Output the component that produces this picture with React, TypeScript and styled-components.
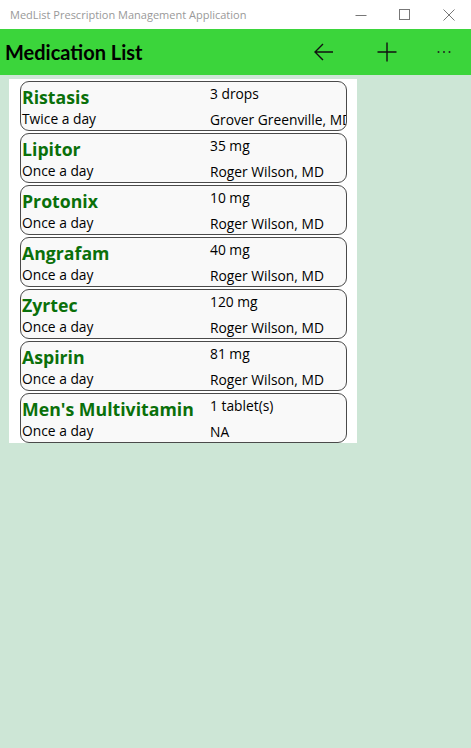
import React from 'react'
import styled, { createGlobalStyle } from 'styled-components'

interface Medication {
  name: string;
  frequency: string;
  dose: string;
  prescriber: string;
}

const meds: Medication[] = [
  { name: 'Ristasis', frequency: 'Twice a day', dose: '3 drops', prescriber: 'Grover Greenville, MD' },
  { name: 'Lipitor', frequency: 'Once a day', dose: '35 mg', prescriber: 'Roger Wilson, MD' },
  { name: 'Protonix', frequency: 'Once a day', dose: '10 mg', prescriber: 'Roger Wilson, MD' },
  { name: 'Angrafam', frequency: 'Once a day', dose: '40 mg', prescriber: 'Roger Wilson, MD' },
  { name: 'Zyrtec', frequency: 'Once a day', dose: '120 mg', prescriber: 'Roger Wilson, MD' },
  { name: 'Aspirin', frequency: 'Once a day', dose: '81 mg', prescriber: 'Roger Wilson, MD' },
  { name: "Men's Multivitamin", frequency: 'Once a day', dose: '1 tablet(s)', prescriber: 'NA' },
];

const App: React.FC = () => {
  return (
    <>
      <GlobalStyle />
      <TitleBar>
        <WindowTitle>MedList Prescription Management Application</WindowTitle>
        <WindowControls>
          <WinButton aria-label="minimize">
            <svg width="12" height="12" viewBox="0 0 12 12">
              <line x1="0.5" y1="6.5" x2="11.5" y2="6.5" stroke="#777" strokeWidth="1" />
            </svg>
          </WinButton>
          <WinButton aria-label="maximize">
            <svg width="12" height="12" viewBox="0 0 12 12">
              <rect x="0.5" y="0.5" width="10" height="10" fill="none" stroke="#777" strokeWidth="1" />
            </svg>
          </WinButton>
          <WinButton aria-label="close">
            <svg width="12" height="12" viewBox="0 0 12 12">
              <path d="M0.5 0.5 L11.5 11.5 M11.5 0.5 L0.5 11.5" stroke="#777" strokeWidth="1" />
            </svg>
          </WinButton>
        </WindowControls>
      </TitleBar>

      <Header>
        <PageTitle>Medication List</PageTitle>
        <Actions>
          <ActionButton aria-label="back">
            <svg width="20" height="20" viewBox="0 0 20 20">
              <path d="M1 10 H19 M9 2 L1 10 L9 18" fill="none" stroke="#111" strokeWidth="1.4" />
            </svg>
          </ActionButton>
          <ActionButton aria-label="add">
            <svg width="20" height="20" viewBox="0 0 20 20">
              <path d="M10 0.5 V19.5 M0.5 10 H19.5" fill="none" stroke="#111" strokeWidth="1.4" />
            </svg>
          </ActionButton>
          <ActionButton aria-label="more">
            <svg width="14" height="4" viewBox="0 0 14 4">
              <circle cx="1.5" cy="2" r="1" fill="#222" />
              <circle cx="7" cy="2" r="1" fill="#222" />
              <circle cx="12.5" cy="2" r="1" fill="#222" />
            </svg>
          </ActionButton>
        </Actions>
      </Header>

      <Content>
        <Panel>
          {meds.map((m) => (
            <Card key={m.name}>
              <LeftCol>
                <MedName>{m.name}</MedName>
                <Detail>{m.frequency}</Detail>
              </LeftCol>
              <RightCol>
                <Detail>{m.dose}</Detail>
                <Detail>{m.prescriber}</Detail>
              </RightCol>
            </Card>
          ))}
        </Panel>
      </Content>
    </>
  )
}
export default App;

const GlobalStyle = createGlobalStyle`
  html, body {
    margin: 0;
    padding: 0;
    background: #cde6d6;
    font-family: "Open Sans", "Noto Sans", sans-serif;
  }
`;

const TitleBar = styled.div`
  height: 29px;
  background: #fff;
  display: flex;
  align-items: center;
  justify-content: space-between;
`;

const WindowTitle = styled.div`
  padding-left: 10px;
  font-size: 11px;
  color: #999;
`;

const WindowControls = styled.div`
  display: flex;
  height: 100%;
`;

const WinButton = styled.div`
  width: 44px;
  height: 100%;
  display: flex;
  align-items: center;
  justify-content: center;
`;

const Header = styled.div`
  height: 46px;
  background: #3bd53b;
  display: flex;
  align-items: center;
  justify-content: space-between;
`;

const PageTitle = styled.h1`
  margin: 0;
  padding-left: 5px;
  font-family: Lato, "Open Sans", sans-serif;
  font-size: 20px;
  font-weight: 700;
  color: #000;
`;

const Actions = styled.div`
  display: flex;
  height: 100%;
  padding-right: 1px;
`;

const ActionButton = styled.div`
  width: 63px;
  height: 100%;
  display: flex;
  align-items: center;
  justify-content: center;

  &:last-child {
    width: 52px;
  }
`;

const Content = styled.div`
  padding: 4px 0 0 9px;
`;

const Panel = styled.div`
  width: 348px;
  box-sizing: border-box;
  background: #fff;
  padding: 2px 10px 0 11px;
  display: flex;
  flex-direction: column;
  gap: 2px;
`;

const Card = styled.div`
  height: 50px;
  box-sizing: border-box;
  border: 1.5px solid #4a4a4a;
  border-radius: 9px;
  background: #f9f9f9;
  overflow: hidden;
  display: grid;
  grid-template-columns: 189px 1fr;
`;

const LeftCol = styled.div`
  display: flex;
  flex-direction: column;
  padding: 3px 0 0 1px;
`;

const RightCol = styled.div`
  display: flex;
  flex-direction: column;
  justify-content: space-between;
  padding-top: 2px;
  white-space: nowrap;
`;

const MedName = styled.div`
  font-size: 17.7px;
  font-weight: 700;
  line-height: 24px;
  color: #0a700a;
  white-space: nowrap;
`;

const Detail = styled.div`
  font-size: 13.8px;
  line-height: 20px;
  color: #000;
  white-space: nowrap;
`;
